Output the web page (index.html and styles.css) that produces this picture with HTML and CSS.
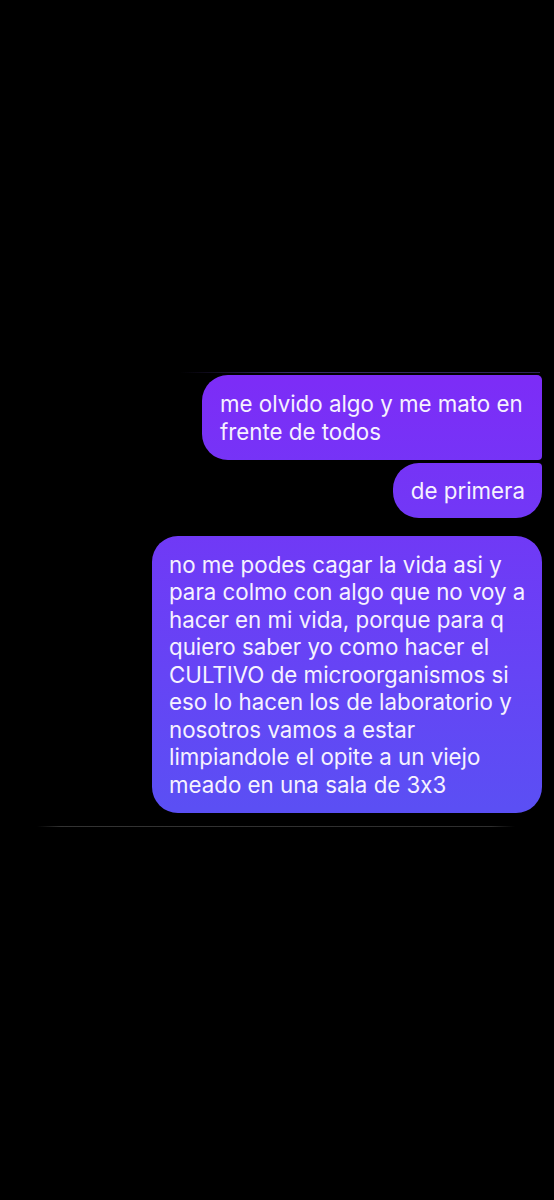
FILE: index.html
```html
<!DOCTYPE html>
<html lang="es">
<head>
  <meta charset="UTF-8" />
  <meta name="viewport" content="width=device-width, initial-scale=1.0"/>
  <title>Chat</title>
  <link rel="stylesheet" href="styles.css">
</head>
<body>
  <div class="chat">
    <div class="line-top"></div>

    <div class="group">
      <div class="bubble first">me olvido algo y me mato en frente de todos</div>
      <div class="bubble last">de primera</div>
    </div>

    <div class="group">
      <div class="bubble single">no me podes cagar la vida asi y para colmo con algo que no voy a hacer en mi vida, porque para q quiero saber yo como hacer el CULTIVO de microorganismos si eso lo hacen los de laboratorio y nosotros vamos a estar limpiandole el opite a un viejo meado en una sala de 3x3</div>
    </div>

    <div class="line-bottom"></div>
  </div>
</body>
</html>
```

FILE: styles.css
```css
body {
  margin: 0;
  background: #000;
  color: #fff;
  font-family: Inter, 'Noto Sans', sans-serif;
  min-height: 1200px;
}
.chat {
  padding-top: 372px;
  display: flex;
  flex-direction: column;
}
.line-top {
  height: 1px;
  margin: 0 14px 2px 180px;
  background: linear-gradient(to right, rgba(60,40,110,0), #3a2a6e 30%, #2e2258);
}
.group {
  display: flex;
  flex-direction: column;
  align-items: flex-end;
  gap: 3px;
  padding-right: 12px;
}
.group + .group {
  margin-top: 18px;
}
.bubble {
  max-width: 356px;
  padding: 15px 17px 15px 18px;
  font-size: 22.3px;
  line-height: 27.5px;
  font-feature-settings: "calt" 0;
  color: #f6f2ff;
  background: linear-gradient(180deg, #7d2cf7 370px, #5a50f4 820px) fixed;
}
.first {
  max-width: 305px;
  border-radius: 26px 5px 4px 26px;
}
.last {
  padding-top: 14px;
  padding-bottom: 13px;
  border-radius: 26px 4px 26px 26px;
}
.single {
  max-width: 360px;
  padding: 15px 13px 15px 17px;
  border-radius: 26px;
}
.line-bottom {
  height: 1px;
  margin: 13px 39px 0 37px;
  background: linear-gradient(to right, rgba(50,50,50,0), #333 5%, #2e2e2e 95%, rgba(50,50,50,0));
}
```
